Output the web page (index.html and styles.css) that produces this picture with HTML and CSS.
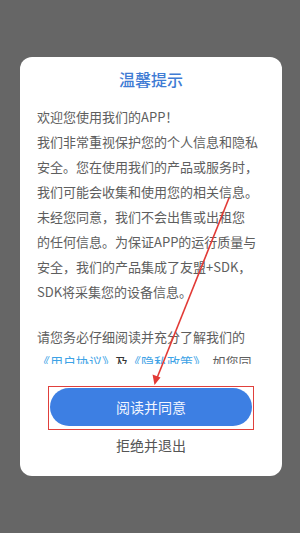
FILE: index.html
```html
<!DOCTYPE html>
<html lang="zh">
<head>
<meta charset="utf-8">
<link rel="stylesheet" href="styles.css">
</head>
<body>
<div class="card">
  <div class="title">温馨提示</div>
  <div class="content">
    <p>欢迎您使用我们的APP！<br>我们非常重视保护您的个人信息和隐私<br>安全。您在使用我们的产品或服务时，<br>我们可能会收集和使用您的相关信息。<br>未经您同意，我们不会出售或出租您<br>的任何信息。为保证APP的运行质量与<br>安全，我们的产品集成了友盟+SDK，<br>SDK将采集您的设备信息。</p>
    <p class="p2">请您务必仔细阅读并充分了解我们的<br><span class="link">《用户协议》</span><span class="dark">及</span><span class="link">《隐私政策》</span>，如您同</p>
  </div>
  <div class="mark">
    <div class="agree">阅读并同意</div>
  </div>
  <div class="refuse">拒绝并退出</div>
</div>
<svg class="arrow" width="300" height="533" viewBox="0 0 300 533">
  <line x1="229" y1="198" x2="157" y2="378" stroke="#e23a36" stroke-width="1.6"/>
  <polygon points="154.5,385 152.5,374.5 160.5,377.5" fill="#e23a36"/>
</svg>
</body>
</html>
```
FILE: styles.css
```css
html, body {
  margin: 0;
  padding: 0;
}
body {
  width: 300px;
  height: 533px;
  background: #666666;
  font-family: "Noto Sans CJK SC", "Noto Sans", sans-serif;
  position: relative;
  overflow: hidden;
}
.card {
  margin: 57px 18px 0 20px;
  background: #ffffff;
  border-radius: 12px;
  padding: 12px 0 21px;
}
.title {
  text-align: center;
  color: #3f7cd4;
  font-size: 16px;
  line-height: 20px;
  font-weight: 500;
}
.content {
  margin-top: 15px;
  padding: 0 17px;
  height: 260px;
  overflow: hidden;
  font-size: 13px;
  line-height: 25px;
  color: #5e5e5e;
  white-space: nowrap;
}
.content p {
  margin: 0;
}
.content .p2 {
  margin-top: 20px;
}
.link {
  color: #3da2e6;
}
.dark {
  color: #333333;
}
.mark {
  margin: 22px auto 0;
  width: 204px;
  border: 1.5px solid #e0403c;
  padding: 1px 0 3px;
}
.agree {
  margin: 0 1px;
  height: 38px;
  border-radius: 19px;
  background: #3d7fe3;
  color: #f2f6ff;
  font-size: 14px;
  line-height: 38px;
  text-align: center;
}
.refuse {
  margin-top: 5px;
  text-align: center;
  font-size: 14px;
  line-height: 20px;
  color: #555555;
}
.arrow {
  position: absolute;
  left: 0;
  top: 0;
  pointer-events: none;
}
```
